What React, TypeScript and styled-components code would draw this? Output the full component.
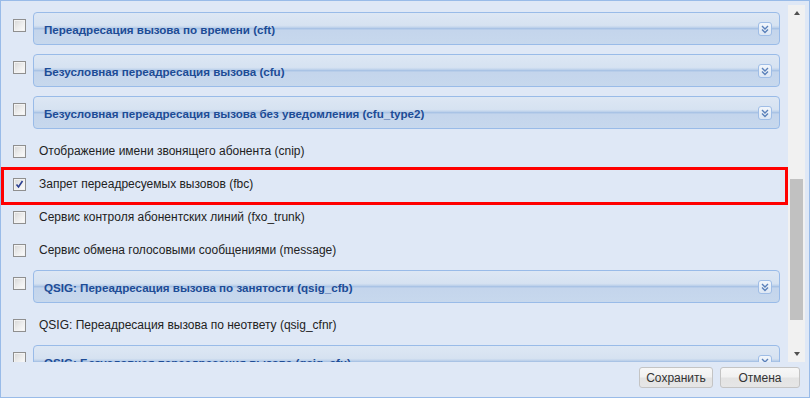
import React from 'react';
import styled, { createGlobalStyle, css } from 'styled-components';

type Item = {
  id: string;
  title: string;
  group?: boolean;
  checked?: boolean;
  marked?: boolean;
};

const items: Item[] = [
  { id: 'cft', title: 'Переадресация вызова по времени (cft)', group: true },
  { id: 'cfu', title: 'Безусловная переадресация вызова (cfu)', group: true },
  { id: 'cfu2', title: 'Безусловная переадресация вызова без уведомления (cfu_type2)', group: true },
  { id: 'cnip', title: 'Отображение имени звонящего абонента (cnip)' },
  { id: 'fbc', title: 'Запрет переадресуемых вызовов (fbc)', checked: true, marked: true },
  { id: 'fxo', title: 'Сервис контроля абонентских линий (fxo_trunk)' },
  { id: 'msg', title: 'Сервис обмена голосовыми сообщениями (message)' },
  { id: 'qcfb', title: 'QSIG: Переадресация вызова по занятости (qsig_cfb)', group: true },
  { id: 'qcfnr', title: 'QSIG: Переадресация вызова по неответу (qsig_cfnr)' },
  { id: 'qcfu', title: 'QSIG: Безусловная переадресация вызова (qsig_cfu)', group: true },
];

const GlobalStyle = createGlobalStyle`
  html, body {
    margin: 0;
    padding: 0;
    background: #dfe8f6;
  }
  body {
    font-family: "Liberation Sans", Arial, sans-serif;
  }
`;

const Window = styled.div`
  width: 810px;
  height: 398px;
  box-sizing: border-box;
  border: 1px solid #99bbe8;
  background: #dfe8f6;
  display: flex;
  flex-direction: column;
  overflow: hidden;
`;

const Body = styled.div`
  display: flex;
  height: 357px;
  margin-top: 4px;
  padding-right: 4px;
`;

const Scroller = styled.div`
  flex: 1;
  overflow: hidden;
  padding-top: 7px;
`;

const Row = styled.div<{ $group?: boolean; $marked?: boolean }>`
  position: relative;
  display: flex;
  align-items: flex-start;
  box-sizing: border-box;
  height: ${(p) => (p.$group ? 42 : 33)}px;
  padding: 7px 8px 0 12px;

  ${(p) =>
    p.$marked &&
    css`
      &::after {
        content: '';
        position: absolute;
        left: 0;
        right: 0;
        top: -4px;
        bottom: -1px;
        border: 3px solid #ff0000;
        pointer-events: none;
      }
    `}
`;

const Box = styled.span`
  flex: none;
  width: 13px;
  height: 13px;
  box-sizing: border-box;
  border: 1px solid #8f8f8f;
  background: linear-gradient(135deg, #d6d6d6 0%, #ececec 50%, #fdfdfd 100%);
  box-shadow: inset 0 0 0 1px #f3f3f3;
  display: flex;
  align-items: center;
  justify-content: center;
`;

const Label = styled.span`
  margin-left: 13px;
  font-size: 12px;
  line-height: 13px;
  color: #222;
  white-space: nowrap;
`;

const Legend = styled.div`
  flex: 1;
  height: 33px;
  margin: -7px 0 0 7px;
  box-sizing: border-box;
  border: 1px solid #99bbe8;
  border-radius: 4px;
  background: linear-gradient(
    to bottom,
    #dde7f4 0%,
    #d6e2f1 40%,
    #c3d5ec 46%,
    #a9c3e5 50%,
    #c4d5ec 56%,
    #c7d8ed 100%
  );
  display: flex;
  align-items: center;
  padding: 1px 7px 0 10px;
`;

const LegendTitle = styled.span`
  flex: 1;
  font-size: 11.6px;
  font-weight: bold;
  color: #1d4c96;
  white-space: nowrap;
`;

const Toggle = styled.span`
  flex: none;
  width: 14px;
  height: 14px;
  box-sizing: border-box;
  border: 1px solid #9fbde6;
  border-radius: 3px;
  background: linear-gradient(to bottom, #f2f6fb, #dde7f4);
  display: flex;
  align-items: center;
  justify-content: center;
`;

const Scrollbar = styled.div`
  width: 17px;
  flex: none;
  background: #f1f1f1;
  display: flex;
  flex-direction: column;
`;

const Arrow = styled.div<{ $down?: boolean }>`
  height: 16px;
  display: flex;
  align-items: center;
  justify-content: center;

  &::before {
    content: '';
    width: 0;
    height: 0;
    border-left: 3.5px solid transparent;
    border-right: 3.5px solid transparent;
    ${(p) =>
      p.$down
        ? css`
            border-top: 4px solid #505050;
          `
        : css`
            border-bottom: 4px solid #505050;
          `}
  }
`;

const Track = styled.div`
  flex: 1;
  padding: 0 2px;
`;

const Thumb = styled.div`
  height: 141px;
  margin-top: 158px;
  background: #c1c1c1;
`;

const Footer = styled.div`
  display: flex;
  justify-content: flex-end;
  gap: 7px;
  padding: 5px 9px 9px 0;
`;

const Button = styled.button<{ $w: number }>`
  width: ${(p) => p.$w}px;
  height: 21px;
  box-sizing: border-box;
  border: 1px solid #c4c4c4;
  border-radius: 3px;
  background: linear-gradient(to bottom, #f7f7f7 0%, #f1f1f1 48%, #e3e3e3 52%, #e6e6e6 100%);
  font-family: "Liberation Sans", Arial, sans-serif;
  font-size: 12px;
  color: #333;
  padding: 0;
  cursor: pointer;
`;

const Check = () => (
  <svg width="9" height="9" viewBox="0 0 9 9">
    <path d="M1.5 4.5 L3.5 7 L7.5 1" fill="none" stroke="#2b3f91" strokeWidth="1.6" />
  </svg>
);

const Chevrons = () => (
  <svg width="8" height="9" viewBox="0 0 8 9">
    <path
      d="M1 1 L4 4 L7 1 M1 4.5 L4 7.5 L7 4.5"
      fill="none"
      stroke="#5a80ba"
      strokeWidth="1.4"
    />
  </svg>
);

const App: React.FC = () => (
  <>
    <GlobalStyle />
    <Window>
      <Body>
        <Scroller>
          {items.map((item) => (
            <Row key={item.id} $group={item.group} $marked={item.marked}>
              <Box>{item.checked && <Check />}</Box>
              {item.group ? (
                <Legend>
                  <LegendTitle>{item.title}</LegendTitle>
                  <Toggle>
                    <Chevrons />
                  </Toggle>
                </Legend>
              ) : (
                <Label>{item.title}</Label>
              )}
            </Row>
          ))}
        </Scroller>
        <Scrollbar>
          <Arrow />
          <Track>
            <Thumb />
          </Track>
          <Arrow $down />
        </Scrollbar>
      </Body>
      <Footer>
        <Button $w={74}>Сохранить</Button>
        <Button $w={80}>Отмена</Button>
      </Footer>
    </Window>
  </>
);

export default App;
